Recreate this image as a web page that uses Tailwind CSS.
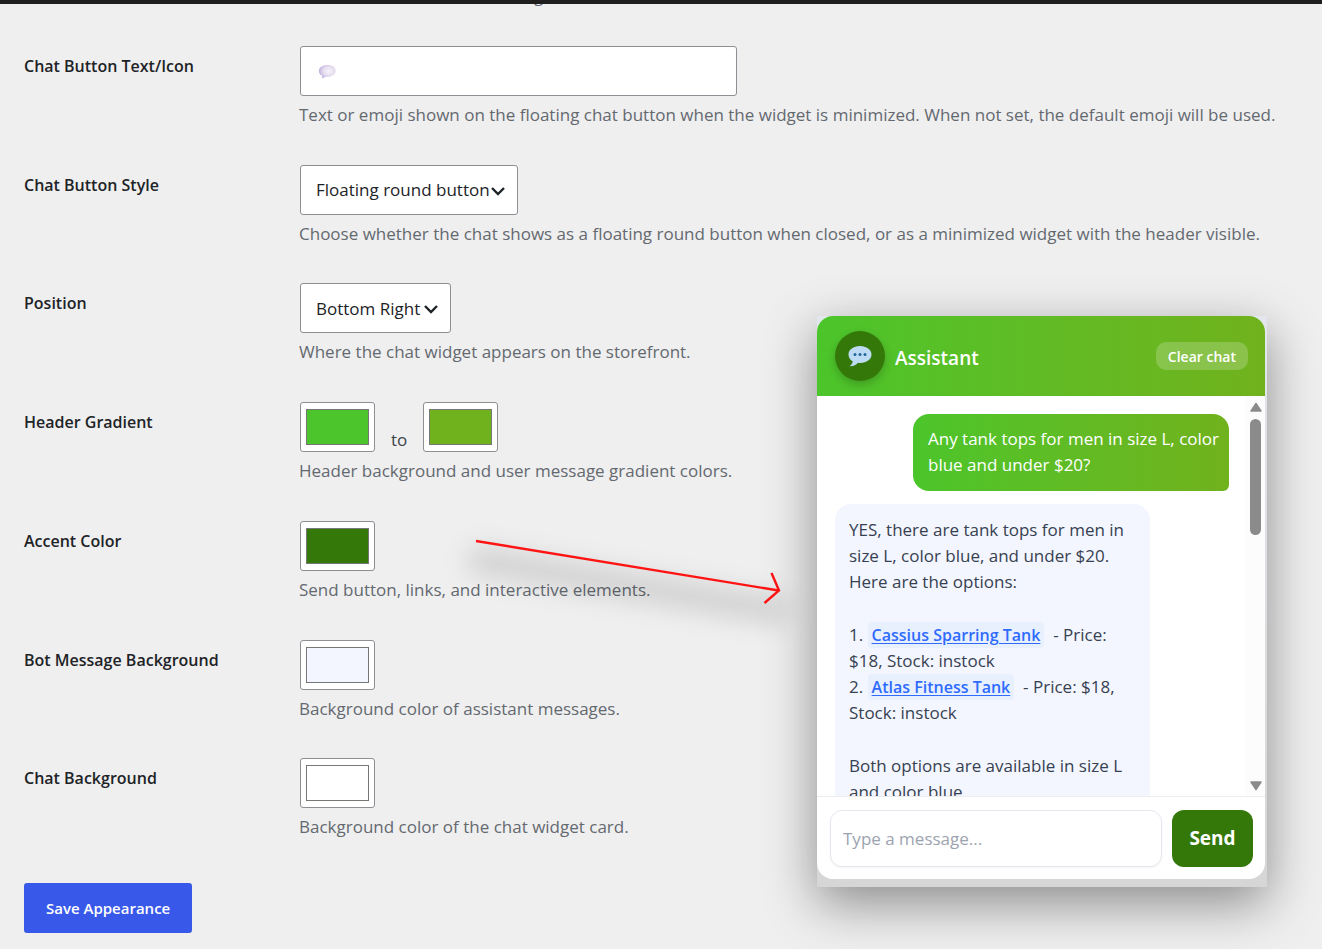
<!DOCTYPE html>
<html lang="en">
<head>
    <meta charset="UTF-8">
    <meta name="viewport" content="width=device-width, initial-scale=1.0">
    <title>Chat Widget Appearance</title>
    <script src="https://cdn.jsdelivr.net/npm/@tailwindcss/browser@4"></script>
</head>
<body class="relative min-h-screen bg-[#efefef] font-['Open_Sans','Noto_Sans',sans-serif] text-[17px] text-[#1d2327]">
    <!-- Admin bar, with the end of the previous setting scrolled under it -->
    <div class="absolute inset-x-0 top-0 h-1.5 overflow-hidden">
        <span class="absolute bottom-0 left-[534px] text-[17px] leading-5 text-[#646970]">g</span>
        <div class="absolute inset-x-0 top-0 h-1 bg-[#1e1e1e]"></div>
    </div>

    <form class="flex min-h-screen flex-col px-6 pt-[46px] pb-4">
        <div class="grid flex-1 auto-rows-fr">
            <div class="flex">
                <label for="buttonText" class="w-[276px] shrink-0 pt-2 text-[16px] font-semibold leading-6">Chat Button Text/Icon</label>
                <div class="min-w-0 flex-1">
                    <div class="relative w-[437px]">
                        <input id="buttonText" type="text" class="block h-[50px] w-full rounded-[3px] border border-[#8c8f94] bg-white px-4">
                        <svg class="pointer-events-none absolute top-[18px] left-[18px] h-4 w-[18px]" viewBox="0 0 18 16">
                            <defs>
                                <radialGradient id="bubbleFill" cx="0.6" cy="0.45" r="0.65">
                                    <stop offset="0" stop-color="#f6f3fa"></stop>
                                    <stop offset="0.5" stop-color="#e6dff0"></stop>
                                    <stop offset="1" stop-color="#b9a3da"></stop>
                                </radialGradient>
                            </defs>
                            <path fill="url(#bubbleFill)" d="M9.500 1C14 1 17.500 3.300 17.500 6.700S14 12.800 9.500 12.800L7.500 12.700 4.200 14.400V11.800C2 10.800.800 9 .800 7 .800 3.500 4.900 1 9.500 1Z"></path>
                        </svg>
                    </div>
                    <p class="mt-[7px] -ml-px leading-6 text-[#646970]">Text or emoji shown on the floating chat button when the widget is minimized. When not set, the default emoji will be used.</p>
                </div>
            </div>

            <div class="flex">
                <label for="buttonStyle" class="w-[276px] shrink-0 pt-2 text-[16px] font-semibold leading-6">Chat Button Style</label>
                <div class="min-w-0 flex-1">
                    <div class="relative w-[218px]">
                        <select id="buttonStyle" class="block h-[50px] w-full appearance-none rounded-[3px] border border-[#8c8f94] bg-white pl-[15px]">
                            <option>Floating round button</option>
                        </select>
                        <svg class="pointer-events-none absolute top-5 right-3 h-3 w-4" viewBox="0 0 16 12" fill="none" stroke="#1d2327" stroke-width="2.400"><path d="M2 3 8 9 14 3"></path></svg>
                    </div>
                    <p class="mt-[7px] -ml-px leading-6 text-[#646970]">Choose whether the chat shows as a floating round button when closed, or as a minimized widget with the header visible.</p>
                </div>
            </div>

            <div class="flex">
                <label for="position" class="w-[276px] shrink-0 pt-2 text-[16px] font-semibold leading-6">Position</label>
                <div class="min-w-0 flex-1">
                    <div class="relative w-[151px]">
                        <select id="position" class="block h-[50px] w-full appearance-none rounded-[3px] border border-[#8c8f94] bg-white pl-[15px]">
                            <option>Bottom Right</option>
                        </select>
                        <svg class="pointer-events-none absolute top-5 right-3 h-3 w-4" viewBox="0 0 16 12" fill="none" stroke="#1d2327" stroke-width="2.400"><path d="M2 3 8 9 14 3"></path></svg>
                    </div>
                    <p class="mt-[7px] -ml-px leading-6 text-[#646970]">Where the chat widget appears on the storefront.</p>
                </div>
            </div>

            <div class="flex">
                <label for="gradientFrom" class="w-[276px] shrink-0 pt-2 text-[16px] font-semibold leading-6">Header Gradient</label>
                <div class="min-w-0 flex-1">
                    <div class="flex items-end gap-4">
                        <input id="gradientFrom" type="color" value="#4bc52b" class="block h-[50px] w-[75px] rounded-[3px] border border-[#8c8f94] bg-white px-[3px] py-0.5">
                        <label for="gradientTo" class="leading-6 text-[#3c434a]">to</label>
                        <input id="gradientTo" type="color" value="#70b21d" class="block h-[50px] w-[75px] rounded-[3px] border border-[#8c8f94] bg-white px-[3px] py-0.5">
                    </div>
                    <p class="mt-[7px] -ml-px leading-6 text-[#646970]">Header background and user message gradient colors.</p>
                </div>
            </div>

            <div class="flex">
                <label for="accent" class="w-[276px] shrink-0 pt-2 text-[16px] font-semibold leading-6">Accent Color</label>
                <div class="min-w-0 flex-1">
                    <input id="accent" type="color" value="#35780a" class="block h-[50px] w-[75px] rounded-[3px] border border-[#8c8f94] bg-white px-[3px] py-0.5">
                    <p class="mt-[7px] -ml-px leading-6 text-[#646970]">Send button, links, and interactive elements.</p>
                </div>
            </div>

            <div class="flex">
                <label for="botBackground" class="w-[276px] shrink-0 pt-2 text-[16px] font-semibold leading-6">Bot Message Background</label>
                <div class="min-w-0 flex-1">
                    <input id="botBackground" type="color" value="#f3f6ff" class="block h-[50px] w-[75px] rounded-[3px] border border-[#8c8f94] bg-white px-[3px] py-0.5">
                    <p class="mt-[7px] -ml-px leading-6 text-[#646970]">Background color of assistant messages.</p>
                </div>
            </div>

            <div class="flex">
                <label for="chatBackground" class="w-[276px] shrink-0 pt-2 text-[16px] font-semibold leading-6">Chat Background</label>
                <div class="min-w-0 flex-1">
                    <input id="chatBackground" type="color" value="#ffffff" class="block h-[50px] w-[75px] rounded-[3px] border border-[#8c8f94] bg-white px-[3px] py-0.5">
                    <p class="mt-[7px] -ml-px leading-6 text-[#646970]">Background color of the chat widget card.</p>
                </div>
            </div>
        </div>
        <button type="submit" class="mt-1.5 h-[50px] self-start rounded-[3px] bg-[#3858e9] px-[22px] text-[15px] font-semibold text-white">Save Appearance</button>
    </form>

    <!-- Arrow pointing at the widget -->
    <svg class="pointer-events-none absolute top-[530px] left-[466px] h-20 w-80 overflow-visible" viewBox="0 0 320 80" fill="none">
        <path class="blur-[13px]" stroke="#000000" stroke-opacity="0.14" stroke-width="24" d="M4 29 320 82"></path>
        <path stroke="#ff1414" stroke-width="2.400" d="M10 11 312.500 60.500M305.500 43 313 60.500 298.500 73"></path>
    </svg>

    <!-- Chat widget -->
    <section class="absolute top-[316px] right-[55px] w-[450px] bg-linear-to-b from-[#e3e6ec] to-[#d6d6d6] pr-0.5 pb-2 shadow-[0_16px_48px_rgba(0,0,0,0.42)]">
        <div class="overflow-hidden rounded-2xl bg-white">
            <header class="flex h-20 items-center bg-linear-to-r from-[#4bc52b] to-[#70b21d] pr-[17px] pl-[18px]">
                <div class="flex size-[50px] items-center justify-center rounded-full bg-[#35780a] shadow-[0_4px_10px_rgba(0,0,0,0.2)]">
                    <svg class="h-[22px] w-6" viewBox="0 0 24 22">
                        <path fill="#bddcf4" d="M12 1C18.500 1 23.500 4.600 23.500 9.500S18.500 18 12.500 18c-.9 0-1.700-.1-2.500-.2C8.200 19.800 5.500 21.200 2.600 21.300c-.5 0-.6-.6-.2-.9 1.500-1 2.300-2.600 2.200-4.200C2 14.700.5 12.300.5 9.500.5 4.600 5.500 1 12 1Z"></path>
                        <g fill="#226699"><circle cx="7" cy="9.500" r="1.500"></circle><circle cx="12" cy="9.500" r="1.500"></circle><circle cx="17" cy="9.500" r="1.500"></circle></g>
                    </svg>
                </div>
                <h2 class="ml-2.5 flex-1 pt-1 text-[19px] font-semibold text-white">Assistant</h2>
                <button type="button" class="h-7 rounded-[10px] bg-white/20 px-3 text-[14px] font-semibold text-white">Clear chat</button>
            </header>

            <div class="flex h-[400px] overflow-hidden">
                <div class="flex min-w-0 flex-1 flex-col gap-[13px] pt-[18px] pr-[17px] pl-[18px]">
                    <div class="w-[316px] shrink-0 self-end whitespace-nowrap rounded-2xl rounded-br-md bg-linear-to-r from-[#4bc52b] to-[#70b21d] px-[15px] pt-3 pb-[13px] leading-[26px] text-white">
                        Any tank tops for men in size L, color<br>blue and under $20?
                    </div>
                    <div class="w-[315px] shrink-0 whitespace-nowrap rounded-2xl bg-[#f3f6ff] px-3.5 py-[13px] leading-[26px] text-[#374151]">
                        <p>YES, there are tank tops for men in<br>size L, color blue, and under $20.<br>Here are the options:</p>
                        <p class="mt-[27px]">1. <a href="#" class="rounded bg-[#e8f0fe] px-1 py-0.5 text-[16px] font-semibold text-[#2f6bff] underline underline-offset-2">Cassius Sparring Tank</a>&nbsp; - Price:<br>$18, Stock: instock</p>
                        <p>2. <a href="#" class="rounded bg-[#e8f0fe] px-1 py-0.5 text-[16px] font-semibold text-[#2f6bff] underline underline-offset-2">Atlas Fitness Tank</a>&nbsp; - Price: $18,<br>Stock: instock</p>
                        <p class="mt-[27px]">Both options are available in size L<br>and color blue.</p>
                    </div>
                </div>
                <div class="flex w-[19px] flex-col items-center bg-[#fcfcfc] pt-1.5 pb-[5px]">
                    <svg class="h-2.5 w-3" viewBox="0 0 12 10" fill="#8b8b8b" stroke="#8b8b8b" stroke-width="1.500" stroke-linejoin="round"><path d="M6 1.500 11 9H1Z"></path></svg>
                    <div class="mt-[7px] h-[116px] w-[11px] rounded-full bg-[#8b8b8b]"></div>
                    <svg class="mt-auto h-2.5 w-3" viewBox="0 0 12 10" fill="#8b8b8b" stroke="#8b8b8b" stroke-width="1.500" stroke-linejoin="round"><path d="M6 8.500 11 1H1Z"></path></svg>
                </div>
            </div>

            <div class="flex gap-2.5 border-t border-[#ececef] px-3 pt-[13px] pb-3 pl-[13px]">
                <input type="text" aria-label="Message" placeholder="Type a message..." class="h-[57px] min-w-0 flex-1 rounded-xl border border-[#e5e7f0] bg-white px-3 shadow-xs placeholder:text-[#9ca3af]">
                <button type="button" class="h-[57px] w-[81px] rounded-xl bg-[#35780a] text-[19px] font-bold text-white">Send</button>
            </div>
        </div>
    </section>
</body>
</html>
